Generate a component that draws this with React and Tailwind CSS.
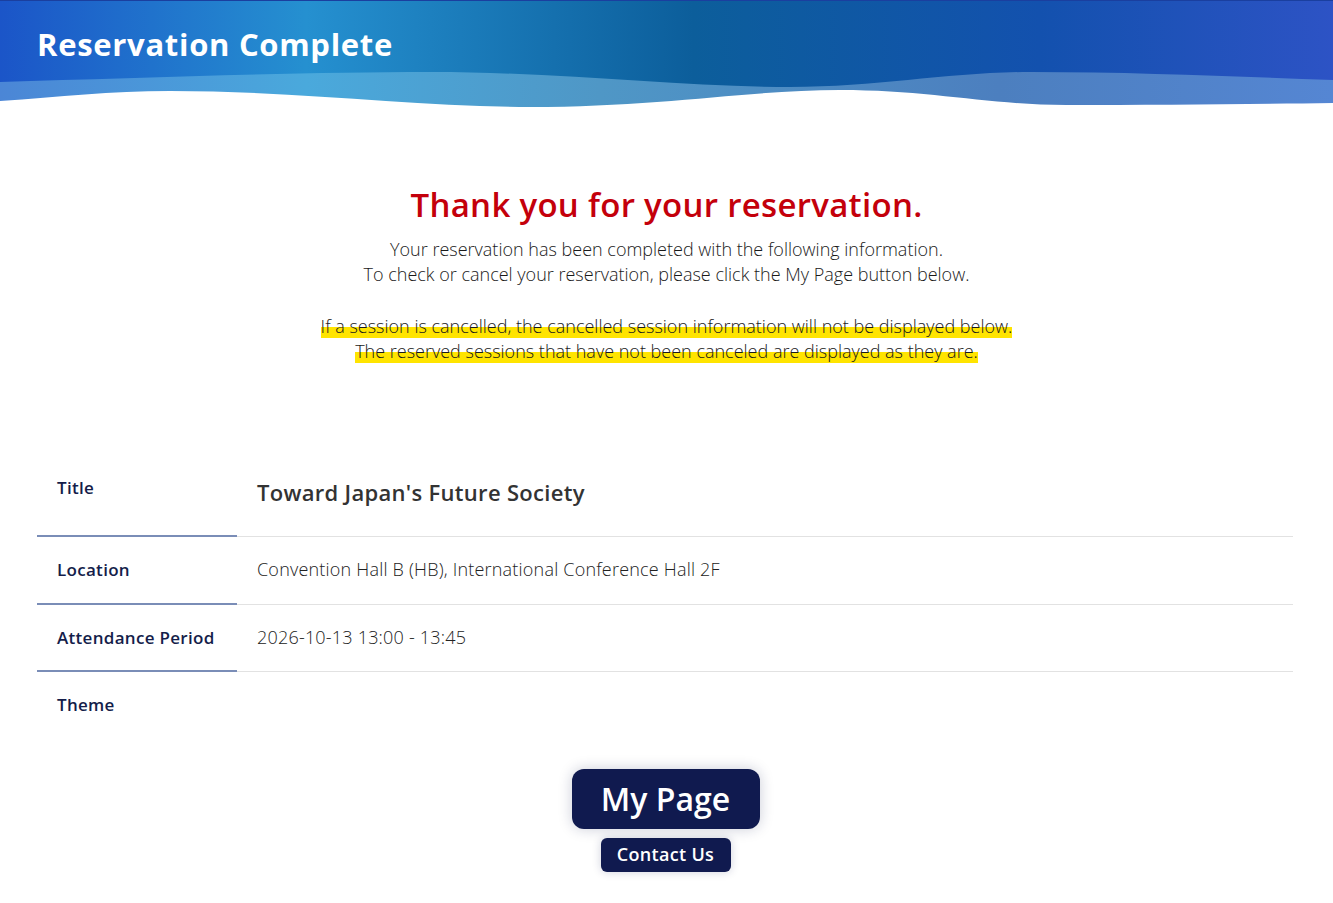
import React from 'react';

const rows = [
  { label: 'Title', value: "Toward Japan's Future Society", big: true },
  { label: 'Location', value: 'Convention Hall B (HB), International Conference Hall 2F' },
  { label: 'Attendance Period', value: '2026-10-13 13:00 - 13:45' },
  { label: 'Theme', value: '' },
];

const Wave = () => (
  <svg
    viewBox="0 0 1333 48"
    preserveAspectRatio="none"
    className="absolute left-0 bottom-0 w-full h-[48px]"
  >
    <defs>
      <linearGradient id="band" x1="0" x2="1" y1="0" y2="0">
        <stop offset="0" stopColor="#4b86d6" />
        <stop offset="0.23" stopColor="#4aa9dc" />
        <stop offset="0.45" stopColor="#4f97c6" />
        <stop offset="0.75" stopColor="#4c7fbf" />
        <stop offset="1" stopColor="#5586d3" />
      </linearGradient>
    </defs>
    <path
      d="M0,22 C140,18 300,12 430,12 C560,12 680,27 790,27 C880,27 950,12 1030,12 C1140,12 1240,17 1333,20 L1333,48 L0,48 Z"
      fill="url(#band)"
    />
    <path
      d="M0,41 C60,37 110,31 170,31 C300,31 420,47 530,47 C660,47 750,30 840,30 C930,30 990,45 1066,45 C1160,45 1260,44 1333,43 L1333,48 L0,48 Z"
      fill="#ffffff"
    />
  </svg>
);

export default function App() {
  return (
    <div className="min-h-screen bg-white font-['Open_Sans','Liberation_Sans',sans-serif] text-[#333]">
      {/* header */}
      <div className="relative h-[108px] border-t border-[#1a3f9f] bg-[linear-gradient(90deg,#1b55c8_0%,#2590d0_23%,#0c5e9b_52%,#1351ae_78%,#2d53c5_100%)]">
        <h1 className="px-[37px] pt-[24px] text-[31px] leading-[38px] font-bold text-white tracking-[0.7px]">
          Reservation Complete
        </h1>
        <Wave />
      </div>

      {/* message */}
      <div className="flex flex-col items-center text-center pt-[77px]">
        <h2 className="text-[33px] leading-[40px] font-semibold text-[#c4000b] tracking-[0.3px]">
          Thank you for your reservation.
        </h2>
        <p className="mt-[12px] text-[18px] leading-[25px] font-light text-[#1a1a1a]">
          Your reservation has been completed with the following information.
          <br />
          To check or cancel your reservation, please click the My Page button below.
        </p>
        <p className="mt-[27px] text-[18px] leading-[25px] font-light text-[#1a1a1a]">
          <span className="bg-[linear-gradient(transparent_55%,#ffe400_55%)]">
            If a session is cancelled, the cancelled session information will not be displayed below.
          </span>
          <br />
          <span className="bg-[linear-gradient(transparent_55%,#ffe400_55%)]">
            The reserved sessions that have not been canceled are displayed as they are.
          </span>
        </p>
      </div>

      {/* details table */}
      <div className="ml-[37px] mr-[40px] mt-[93px]">
        {rows.map((r, i) => (
          <div key={r.label} className="flex">
            <div
              className={`w-[200px] shrink-0 pl-[20px] text-[17px] leading-[25px] font-semibold text-[#141d4a] tracking-[0.3px] ${
                r.big ? 'pt-[18px] pb-[35px]' : 'pt-[20px] pb-[20.5px]'
              } ${i < rows.length - 1 ? 'border-b-2 border-[#7a8db7]' : ''}`}
            >
              {r.label}
            </div>
            <div
              className={`flex-1 pl-[20px] ${
                r.big
                  ? 'text-[22px] leading-[30px] font-semibold text-[#333] pt-[20px] tracking-[0.3px]'
                  : 'text-[18px] leading-[25px] font-light text-[#222] py-[20px] tracking-[0.2px]'
              } ${i < rows.length - 1 ? 'border-b border-[#e2e2e2]' : ''}`}
            >
              {r.value}
            </div>
          </div>
        ))}
      </div>

      {/* buttons */}
      <div className="flex flex-col items-center gap-[9px] mt-[31px] pb-[30px] pr-[2px]">
        <button className="w-[188px] h-[60px] rounded-[12px] bg-[#101a4f] text-white text-[32px] font-semibold shadow-[0_0_14px_rgba(16,26,79,0.22)]">
          My Page
        </button>
        <button className="w-[130px] h-[34px] rounded-[6px] bg-[#101a4f] text-white text-[18px] font-semibold tracking-[0.3px] shadow-[0_0_10px_rgba(16,26,79,0.2)]">
          Contact Us
        </button>
      </div>
    </div>
  );
}
